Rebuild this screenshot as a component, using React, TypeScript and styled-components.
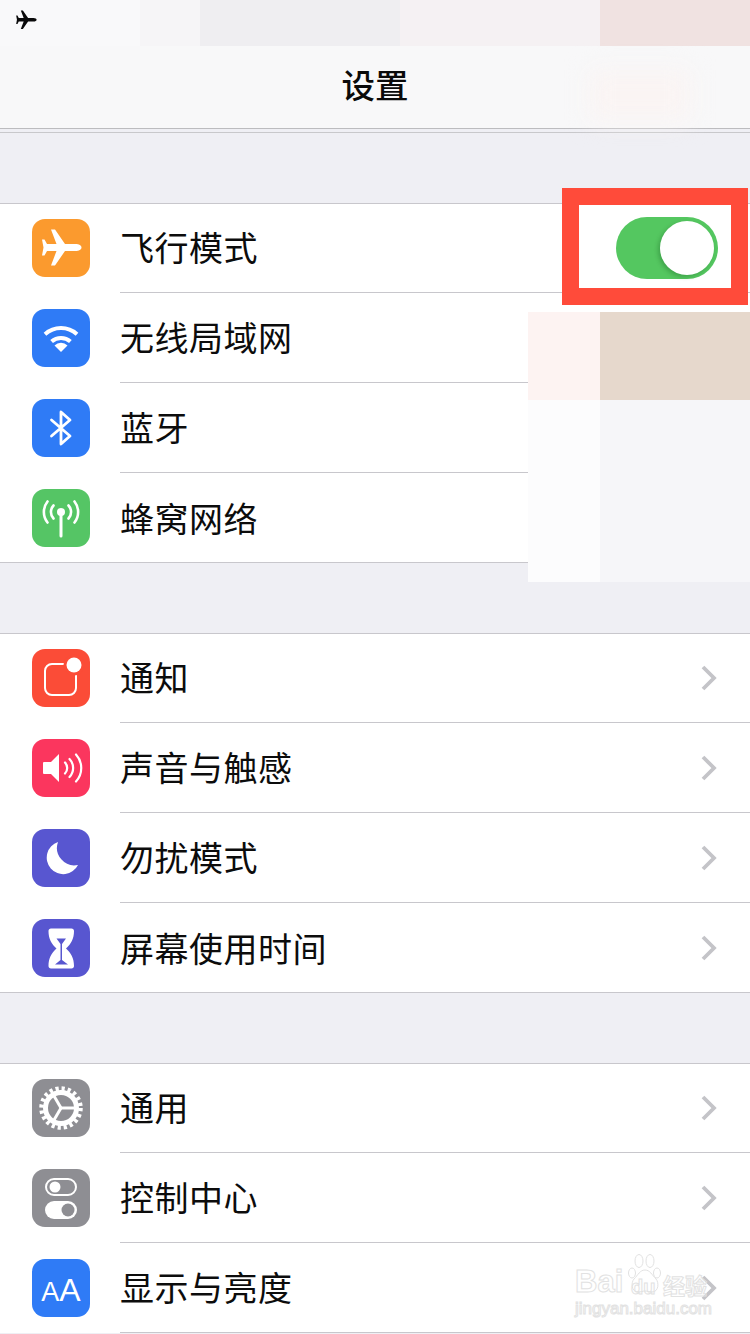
import React from "react";
import styled, { createGlobalStyle } from "styled-components";

const Global = createGlobalStyle`
  html, body { margin: 0; padding: 0; background: #efeff4; }
  body { font-family: "Noto Sans CJK SC", "Liberation Sans", sans-serif; }
`;

const Page = styled.div`
  position: relative;
  width: 750px;
  height: 1334px;
  overflow: hidden;
  background: #efeff4;
  color: #0a0a0a;
`;

const StatusBar = styled.div`
  position: relative;
  height: 46px;
  display: flex;
  background: #f9f9fa;
`;

const StatusTile = styled.div<{ $w: number; $c: string }>`
  width: ${(p) => p.$w}px;
  background: ${(p) => p.$c};
`;

const StatusPlane = styled.svg`
  position: absolute;
  left: 11px;
  top: 5px;
  width: 30px;
  height: 30px;
  fill: #0a0a0a;
`;

const NavBar = styled.header`
  position: relative;
  height: 83px;
  box-sizing: border-box;
  display: flex;
  align-items: center;
  justify-content: center;
  background: #f8f8f9;
  border-bottom: 1px solid #bcbcbf;
  font-size: 33.500px;
  font-weight: 500;
  padding-bottom: 8px;
`;

const NavTint = styled.div`
  position: absolute;
  left: 590px;
  top: 24px;
  width: 100px;
  height: 50px;
  background: #faf4f3;
  filter: blur(12px);
`;

const NavTitle = styled.span`
  position: relative;
`;

const NavRule = styled.div`
  margin-top: 3px;
  height: 1px;
  background: #c8c8cb;
`;

const Section = styled.section<{ $open?: boolean }>`
  margin-top: 70px;
  background: #fff;
  box-shadow: inset 0 1px 0 #c8c7cc
    ${(p) => (p.$open ? "" : ", inset 0 -1px 0 #c8c7cc")};
`;

const Row = styled.div`
  height: 90px;
  display: flex;
  align-items: stretch;
  padding-left: 32px;
`;

const IconTile = styled.div<{ $c: string }>`
  flex: none;
  align-self: center;
  width: 58px;
  height: 58px;
  margin-right: 30px;
  border-radius: 13px;
  background: ${(p) => p.$c};
  display: flex;
  align-items: center;
  justify-content: center;
  color: #fff;
  svg { display: block; width: 58px; height: 58px; }
`;

const RowBody = styled.div<{ $line: boolean }>`
  flex: 1;
  display: flex;
  align-items: center;
  justify-content: space-between;
  padding-right: 32px;
  box-sizing: border-box;
  ${(p) => (p.$line ? "border-bottom: 1px solid #c8c7cc;" : "")}
`;

const Label = styled.span`
  font-size: 34px;
  line-height: 40px;
  font-weight: 400;
  letter-spacing: 0.5px;
  color: #0c0c0c;
  margin-top: -1px;
`;

const Chevron = styled.svg`
  width: 20px;
  height: 28px;
  margin-right: -1px;
  fill: none;
  stroke: #c4c4c8;
  stroke-width: 3.800;
`;

const SwitchTrack = styled.div`
  position: relative;
  width: 102px;
  height: 62px;
  border-radius: 31px;
  background: #54c760;
`;

const SwitchKnob = styled.div`
  position: absolute;
  right: 4px;
  top: 4px;
  width: 54px;
  height: 54px;
  border-radius: 50%;
  background: #fff;
  box-shadow: -2px 2px 4px rgba(0, 60, 10, 0.25);
`;

const Highlight = styled.div`
  position: absolute;
  left: 562px;
  top: 188px;
  width: 186px;
  height: 117px;
  box-sizing: border-box;
  border: solid #ff4b3a;
  border-width: 17px;
  pointer-events: none;
`;

const Patch = styled.div<{ $x: number; $y: number; $w: number; $h: number; $c: string }>`
  position: absolute;
  left: ${(p) => p.$x}px;
  top: ${(p) => p.$y}px;
  width: ${(p) => p.$w}px;
  height: ${(p) => p.$h}px;
  background: ${(p) => p.$c};
`;

const Watermark = styled.div`
  position: absolute;
  left: 575px;
  top: 1252px;
  width: 140px;
  height: 68px;
  color: transparent;
  -webkit-text-stroke: 1px #e2e2e2;
  font-family: "Liberation Sans", sans-serif;
  pointer-events: none;
`;

const MarkLogo = styled.span`
  position: absolute;
  left: 0;
  top: 15px;
  font-size: 31px;
  line-height: 30px;
  font-weight: 700;
`;

const MarkPaw = styled.svg`
  position: absolute;
  left: 52px;
  top: 0;
  width: 36px;
  height: 44px;
  fill: none;
  stroke: #e2e2e2;
  stroke-width: 1;
`;

const MarkDu = styled.span`
  position: absolute;
  left: 56px;
  top: 26px;
  font-size: 20px;
  line-height: 18px;
  font-weight: 700;
`;

const MarkCn = styled.span`
  position: absolute;
  left: 88px;
  top: 19px;
  font-size: 22px;
  line-height: 26px;
  font-family: "Noto Sans CJK SC", sans-serif;
  font-weight: 700;
`;

const MarkUrl = styled.span`
  position: absolute;
  left: 0;
  top: 47px;
  font-size: 17px;
  line-height: 20px;
  white-space: nowrap;
`;

const AAWrap = styled.div`
  display: flex;
  align-items: baseline;
  font-family: "Liberation Sans", sans-serif;
  font-weight: 400;
  color: #fff;
  line-height: 1;
  margin-top: 3px;
`;

const SmallA = styled.span`
  font-size: 27px;
`;

const BigA = styled.span`
  font-size: 32px;
`;

const PLANE =
  "M49.500 28.500c0-2-2.500-3.500-6-3.500H33L23 10.500h-4L24.500 25H15l-2.500-4.500H10l1.500 8-1.500 8h2.500L15 32h9.500L19 46.500h4L33 32h10.500c3.500 0 6-1.500 6-3.500z";

const Plane = () => (
  <svg viewBox="0 0 58 58" fill="#fff">
    <path d={PLANE} />
  </svg>
);

const Wifi = () => (
  <svg viewBox="0 0 58 58" fill="none" stroke="#fff" strokeWidth="4">
    <path d="M13 25.200A24 24 0 0 1 45 25.200" />
    <path d="M19.600 32.600A14 14 0 0 1 38.400 32.600" />
    <path d="M29 43L22.500 36.500A9.200 9.200 0 0 1 35.500 36.500Z" fill="#fff" stroke="none" />
  </svg>
);

const Bluetooth = () => (
  <svg viewBox="0 0 58 58" fill="none" stroke="#fff" strokeWidth="2.800" strokeLinejoin="round" strokeLinecap="round">
    <path d="M19.500 21L38 37L29 45V13L38 21L19.500 37" />
  </svg>
);

const Cellular = () => (
  <svg viewBox="0 0 58 58" fill="none" stroke="#fff" strokeWidth="2.600" strokeLinecap="round">
    <circle cx="29" cy="23" r="4" fill="#fff" stroke="none" />
    <path d="M29 24V47" strokeWidth="3" />
    <path d="M21.500 16.500A9.500 9.500 0 0 0 21.500 29.500" />
    <path d="M36.500 16.500A9.500 9.500 0 0 1 36.500 29.500" />
    <path d="M15.500 12.500A17 17 0 0 0 15.500 33.500" />
    <path d="M42.500 12.500A17 17 0 0 1 42.500 33.500" />
  </svg>
);

const Bell = () => (
  <svg viewBox="0 0 58 58" fill="none">
    <rect x="13" y="15" width="31" height="31" rx="7" stroke="#fff" strokeWidth="2" />
    <circle cx="42" cy="16" r="10.500" fill="#fb4c37" />
    <circle cx="42" cy="16" r="7.500" fill="#fff" />
  </svg>
);

const Sound = () => (
  <svg viewBox="0 0 58 58" fill="none" stroke="#fff" strokeWidth="2.200" strokeLinecap="round">
    <path d="M12 23h7l8-8v28l-8-8h-7a1 1 0 0 1-1-1V24a1 1 0 0 1 1-1z" fill="#fff" stroke="none" />
    <path d="M33 23.500A8 8 0 0 1 33 34.500" />
    <path d="M37.500 20A13 13 0 0 1 37.500 38" />
    <path d="M44 15.500A20 20 0 0 1 44 42.500" />
  </svg>
);

const Moon = () => (
  <svg viewBox="0 0 58 58" fill="#fff">
    <path d="M26 13A16.500 16.500 0 1 0 46 36A17.500 17.500 0 0 1 26 13Z" />
  </svg>
);

const Hourglass = () => (
  <svg viewBox="0 0 58 58">
    <path
      fill="#fff"
      d="M19 9.500h20.500c1.500 0 2.500 1 2.500 2.500 0 8-3 13-8 17.500 5 4.500 8 9.500 8 17.500 0 1.500-1 2.500-2.500 2.500H19c-1.500 0-2.500-1-2.500-2.500 0-8 3-13 8-17.500-5-4.500-8-9.500-8-17.500 0-1.500 1-2.500 2.500-2.500z"
    />
    <path fill="#5856d0" d="M24.500 19.500h9.500L30 25v16l6 4.500H23l5.500-4.500V25z" />
  </svg>
);

const Gear = () => {
  const spokes = [0, 120, 240];
  return (
    <svg viewBox="0 0 58 58" fill="none" stroke="#fff">
      <circle cx="29" cy="29" r="19.500" strokeWidth="4.500" strokeDasharray="3.200 2.926" />
      <circle cx="29" cy="29" r="15.500" strokeWidth="5" />
      {spokes.map((a) => (
        <path key={a} d="M29 29H43" strokeWidth="3" transform={`rotate(${a} 29 29)`} />
      ))}
    </svg>
  );
};

const Toggles = () => (
  <svg viewBox="0 0 58 58" fill="none">
    <rect x="14" y="10" width="30" height="16" rx="8" stroke="#fff" strokeWidth="2" />
    <circle cx="23" cy="18" r="5.500" fill="#fff" />
    <rect x="13" y="32" width="32" height="18" rx="9" fill="#fff" />
    <circle cx="36" cy="41" r="6.500" fill="#8e8e93" />
  </svg>
);

const AA = () => (
  <AAWrap>
    <SmallA>A</SmallA>
    <BigA>A</BigA>
  </AAWrap>
);

type Item = { label: string; color: string; icon: React.ReactNode };

const group1: Item[] = [
  { label: "飞行模式", color: "#fb9a2e", icon: <Plane /> },
  { label: "无线局域网", color: "#2f7bf6", icon: <Wifi /> },
  { label: "蓝牙", color: "#2f7bf6", icon: <Bluetooth /> },
  { label: "蜂窝网络", color: "#55c565", icon: <Cellular /> },
];
const group2: Item[] = [
  { label: "通知", color: "#fb4c37", icon: <Bell /> },
  { label: "声音与触感", color: "#fb365e", icon: <Sound /> },
  { label: "勿扰模式", color: "#5856d0", icon: <Moon /> },
  { label: "屏幕使用时间", color: "#5856d0", icon: <Hourglass /> },
];
const group3: Item[] = [
  { label: "通用", color: "#8e8e93", icon: <Gear /> },
  { label: "控制中心", color: "#8e8e93", icon: <Toggles /> },
  { label: "显示与亮度", color: "#2f7bf6", icon: <AA /> },
];

const Arrow = () => (
  <Chevron viewBox="0 0 20 28">
    <path d="M4 3L15 14L4 25" />
  </Chevron>
);

const patches = [
  { x: 528, y: 312, w: 72, h: 88, c: "#fdf3f2" },
  { x: 600, y: 312, w: 150, h: 88, c: "#e6d8cc" },
  { x: 528, y: 400, w: 72, h: 182, c: "#fcfcfd" },
  { x: 600, y: 400, w: 150, h: 182, c: "#f6f6f9" },
];

export default function App() {
  return (
    <Page>
      <Global />
      <StatusBar>
        <StatusTile $w={140} $c="#f9f9fa" />
        <StatusTile $w={60} $c="#f6f5f7" />
        <StatusTile $w={200} $c="#efeef1" />
        <StatusTile $w={200} $c="#f5f1f3" />
        <StatusTile $w={150} $c="#f0e2e1" />
        <StatusPlane viewBox="0 0 58 58">
          <path d={PLANE} />
        </StatusPlane>
      </StatusBar>
      <NavBar>
        <NavTint />
        <NavTitle>设置</NavTitle>
      </NavBar>
      <NavRule />

      <Section>
        {group1.map((it, i) => (
          <Row key={it.label}>
            <IconTile $c={it.color}>{it.icon}</IconTile>
            <RowBody $line={i < group1.length - 1}>
              <Label>{it.label}</Label>
              {i === 0 && (
                <SwitchTrack>
                  <SwitchKnob />
                </SwitchTrack>
              )}
            </RowBody>
          </Row>
        ))}
      </Section>

      <Section>
        {group2.map((it, i) => (
          <Row key={it.label}>
            <IconTile $c={it.color}>{it.icon}</IconTile>
            <RowBody $line={i < group2.length - 1}>
              <Label>{it.label}</Label>
              <Arrow />
            </RowBody>
          </Row>
        ))}
      </Section>

      <Section $open>
        {group3.map((it) => (
          <Row key={it.label}>
            <IconTile $c={it.color}>{it.icon}</IconTile>
            <RowBody $line>
              <Label>{it.label}</Label>
              <Arrow />
            </RowBody>
          </Row>
        ))}
      </Section>

      {patches.map((p) => (
        <Patch key={`${p.x}-${p.y}`} $x={p.x} $y={p.y} $w={p.w} $h={p.h} $c={p.c} />
      ))}
      <Highlight />
      <Watermark>
        <MarkLogo>Bai</MarkLogo>
        <MarkPaw viewBox="0 0 36 44">
          <ellipse cx="5" cy="21" rx="3.500" ry="5" />
          <ellipse cx="12" cy="9" rx="4" ry="6.500" />
          <ellipse cx="23" cy="9" rx="4" ry="6.500" />
          <ellipse cx="30" cy="21" rx="3.500" ry="5" />
          <path d="M18 18c-5 0-7 5-11 9-3 3-3 13 4 13 3 0 5-1 7-1s4 1 7 1c7 0 7-10 4-13-4-4-6-9-11-9z" />
        </MarkPaw>
        <MarkDu>du</MarkDu>
        <MarkCn>经验</MarkCn>
        <MarkUrl>jingyan.baidu.com</MarkUrl>
      </Watermark>
    </Page>
  );
}
